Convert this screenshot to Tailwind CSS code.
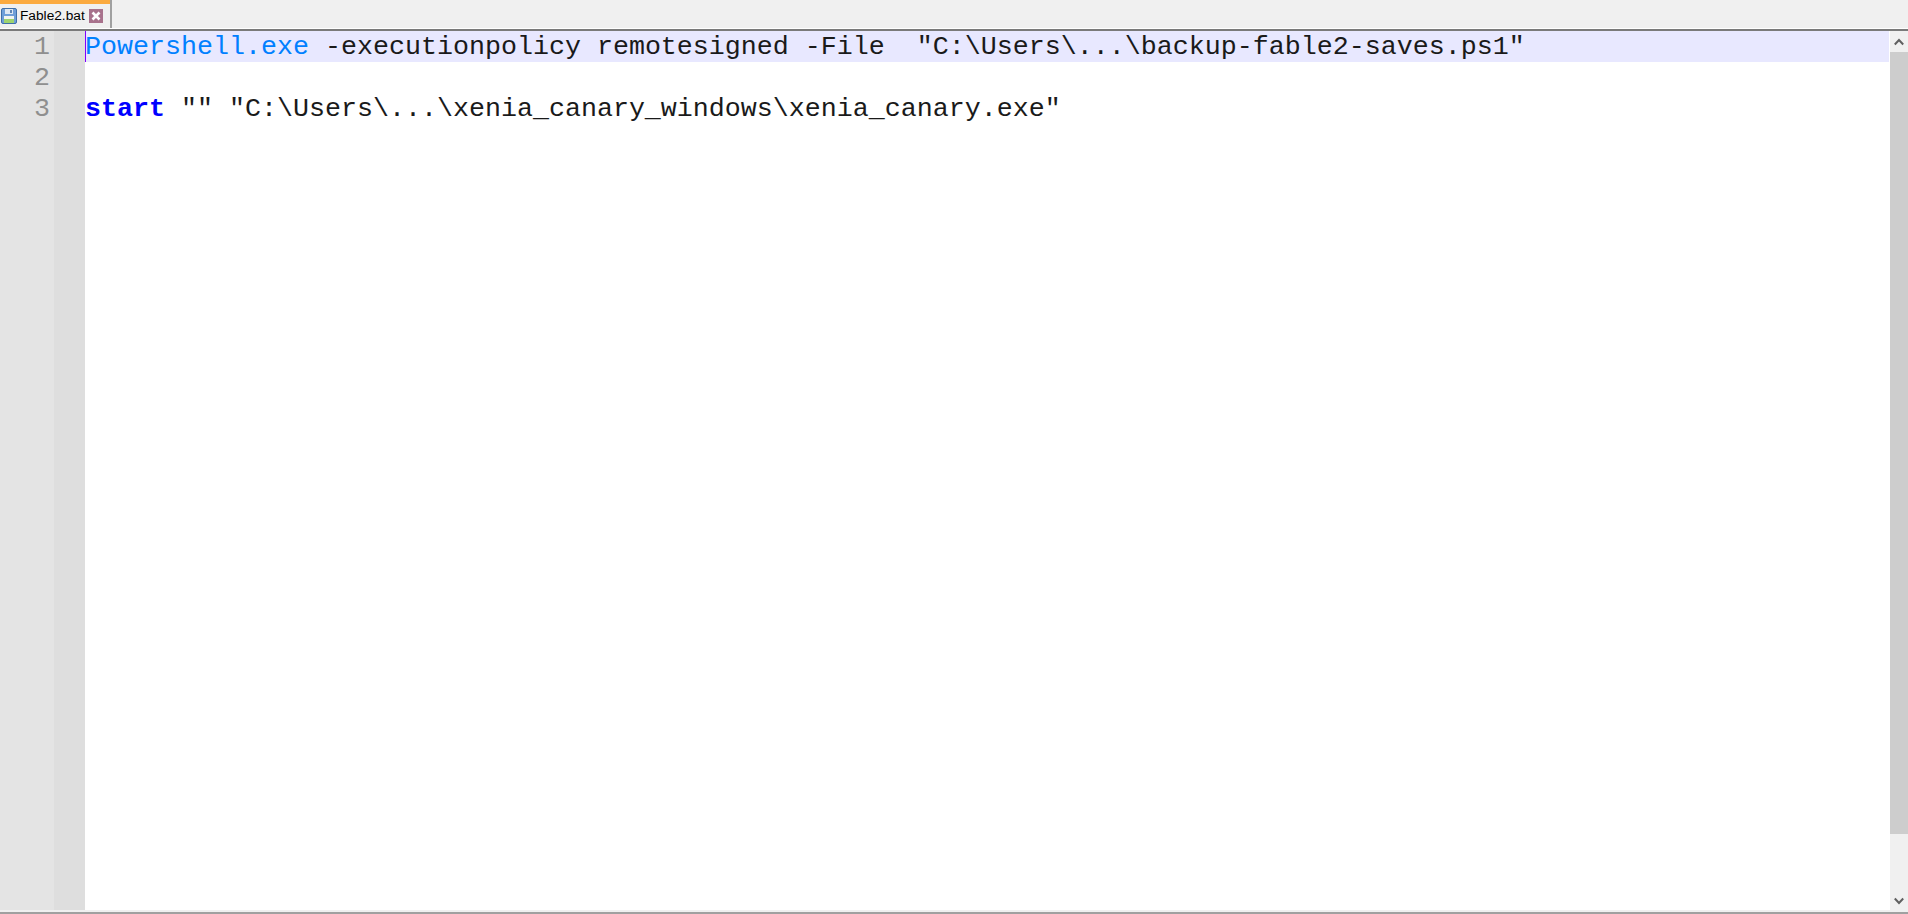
<!DOCTYPE html>
<html>
<head>
<meta charset="utf-8">
<script src="https://cdn.jsdelivr.net/npm/@tailwindcss/browser@4"></script>
</head>
<body class="m-0 h-[914px] w-[1908px] overflow-hidden bg-[#f0f0f0] flex flex-col">
  <!-- Tab bar -->
  <div class="h-[28px] shrink-0 bg-[#f0f0f0] flex items-stretch">
    <div class="w-[112px] h-[28px] bg-[#f0f0f0] border-r-2 border-r-[#a0a0a0] flex flex-col">
      <div class="h-[4px] bg-[#fbaa3f] shrink-0"></div>
      <div class="flex items-center h-[24px] pl-[1px]">
        <svg width="16" height="16" viewBox="0 0 16 16" class="shrink-0">
          <rect x="0.5" y="0.5" width="15" height="15" rx="1.5" fill="#6f9fd8" stroke="#3f6fa8"/>
          <rect x="4" y="1" width="8" height="5" fill="#dfe8f3"/>
          <rect x="9" y="2" width="2" height="3" fill="#5f86b4"/>
          <rect x="3" y="8" width="10" height="7" fill="#f2f5f0"/>
          <rect x="3" y="11" width="10" height="4" fill="#9fd46f"/>
        </svg>
        <span class="ml-[3px] text-[13.7px] leading-[16px] text-black font-['Liberation_Sans',sans-serif]">Fable2.bat</span>
        <svg width="14" height="14" viewBox="0 0 14 14" class="ml-[4px] shrink-0">
          <rect width="14" height="14" fill="#a8728c"/>
          <path d="M3.5 3.5 L10.5 10.5 M10.5 3.5 L3.5 10.5" stroke="#ffffff" stroke-width="2.6"/>
        </svg>
      </div>
    </div>
  </div>
  <div class="h-[1px] shrink-0 bg-white"></div>
  <div class="h-[2px] shrink-0 bg-[#7a7a7a]"></div>

  <!-- Editor -->
  <div class="flex-1 min-h-0 flex">
    <div class="w-[54px] shrink-0 bg-[#e4e4e4] font-['Liberation_Mono',monospace] text-[26.67px] leading-[33px] text-[#8f8f8f] text-right pr-[4px]">
      <div class="h-[31px]">1</div>
      <div class="h-[31px]">2</div>
      <div class="h-[31px]">3</div>
    </div>
    <div class="w-[31px] shrink-0 bg-[#dedede]"></div>
    <div class="flex-1 min-w-0 bg-white pr-[1px] font-['Liberation_Mono',monospace] text-[26.67px] leading-[33px] text-[#1a1a1a]">
      <div class="h-[31px] bg-[#e8e8ff] relative whitespace-pre"><span class="absolute left-0 top-0 w-[1px] h-[31px] bg-[#8000ff]"></span><span class="text-[#0080ff]">Powershell.exe</span> -executionpolicy remotesigned -File  "C:\Users\...\backup-fable2-saves.ps1"</div>
      <div class="h-[31px]"></div>
      <div class="h-[31px] whitespace-pre"><span class="font-bold text-[#0000ff]">start</span> "" "C:\Users\...\xenia_canary_windows\xenia_canary.exe"</div>
    </div>
    <!-- Scrollbar -->
    <div class="w-[18px] shrink-0 bg-[#f0f0f0] flex flex-col">
      <div class="h-[21px] shrink-0 flex items-center justify-center">
        <svg width="10" height="8" viewBox="0 0 10 8"><path d="M0.8 6.5 L5 2 L9.2 6.5" fill="none" stroke="#606060" stroke-width="2"/></svg>
      </div>
      <div class="h-[782px] shrink-0 bg-[#cdcdcd]"></div>
      <div class="flex-1"></div>
      <div class="h-[18px] shrink-0 flex items-center justify-center">
        <svg width="10" height="8" viewBox="0 0 10 8"><path d="M0.8 1.5 L5 6 L9.2 1.5" fill="none" stroke="#606060" stroke-width="2"/></svg>
      </div>
    </div>
  </div>
  <div class="h-[2px] shrink-0 bg-[#f0f0f0]"></div>
  <div class="h-[2px] shrink-0 bg-[#a0a0a0]"></div>
</body>
</html>
